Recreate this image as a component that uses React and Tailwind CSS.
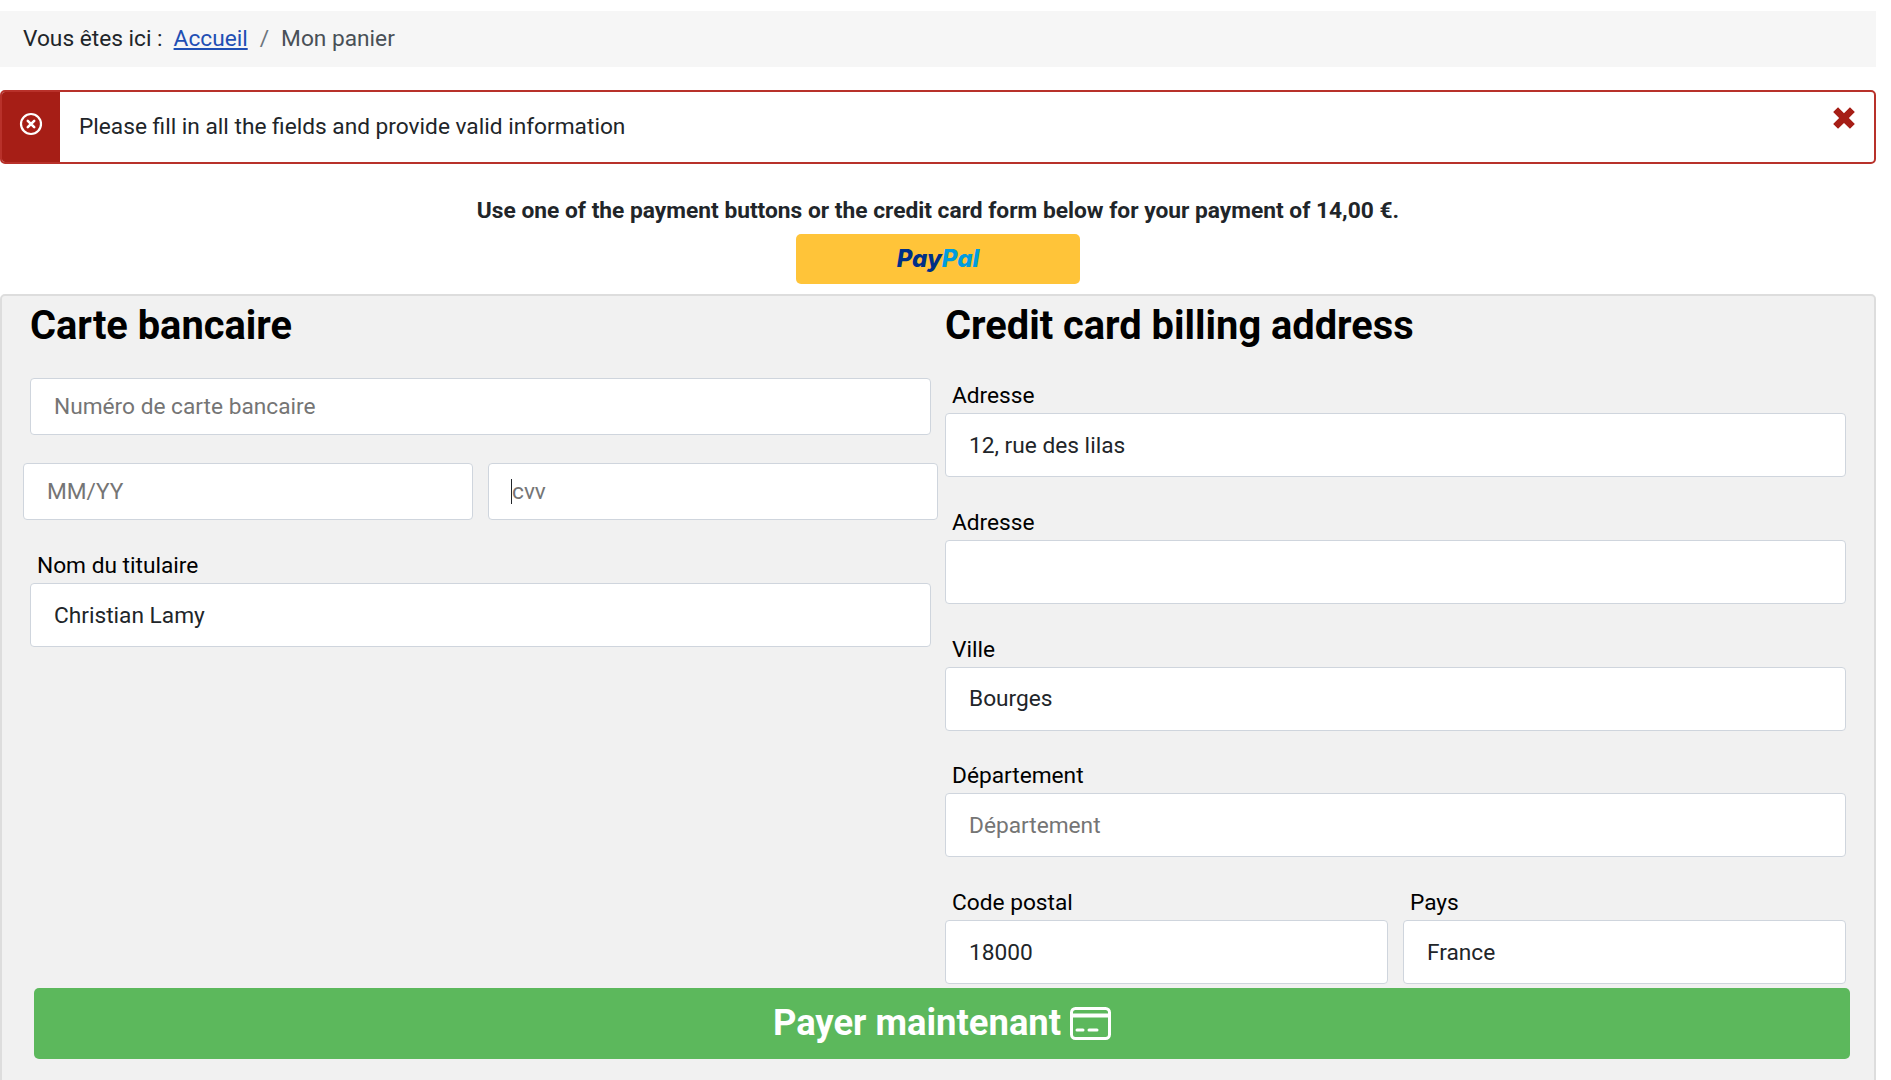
import React from 'react';

const fieldCls = "w-full bg-white border-[1.5px] border-[#cfd5dd] rounded-[4px] px-[23px] text-[22.7px] text-[#212529] placeholder:text-[#757575] outline-none";

function Field({ label, value, placeholder, labelTop = 'mt-[33.75px]' }) {
  return (
    <div className={labelTop}>
      <label className="block pl-[7px] mb-[5px] h-[24px] leading-[24px] text-[22.7px] text-black">{label}</label>
      <input readOnly className={`${fieldCls} h-[64px]`} value={value || ''} placeholder={placeholder} />
    </div>
  );
}

export default function App() {
  return (
    <div className="h-screen overflow-hidden bg-white font-['Roboto',sans-serif] text-[#212529]">
      <div className="w-[1876px] pt-[11px]">
        {/* breadcrumb */}
        <div className="h-[56px] bg-[#f6f6f6] flex items-center pl-[23px] text-[22.7px]">
          <span>Vous êtes ici :</span>
          <a href="#" className="ml-[11px] text-[#1f4fb4] underline">Accueil</a>
          <span className="mx-[12px] text-[#6c757d]">/</span>
          <span className="text-[#495057]">Mon panier</span>
        </div>

        {/* alert */}
        <div className="relative mt-[23px] h-[74px] flex items-center bg-white border-2 border-[#b8312a] rounded-[5px] overflow-hidden">
          <div className="h-full w-[58px] bg-[#a61e16] flex items-start justify-center pt-[20px] shrink-0">
            <svg width="24" height="24" viewBox="0 0 24 24" fill="none" stroke="white" strokeWidth="2.2" strokeLinecap="round">
              <circle cx="12" cy="12" r="10" />
              <path d="M8.8 8.8l6.4 6.4M15.2 8.8l-6.4 6.4" strokeWidth="2.6" />
            </svg>
          </div>
          <span className="ml-[19px] pt-[1px] text-[22.7px]">Please fill in all the fields and provide valid information</span>
          <svg className="absolute right-[17px] top-[13px]" width="26" height="26" viewBox="0 0 24 24" fill="#a61e16">
            <path d="M2 6.5L6.5 2 12 7.5 17.5 2 22 6.5 16.5 12 22 17.5 17.5 22 12 16.5 6.5 22 2 17.5 7.5 12z" />
          </svg>
        </div>

        {/* payment intro */}
        <p className="mt-[32px] h-[29px] leading-[29px] text-center font-bold text-[22.75px]">
          Use one of the payment buttons or the credit card form below for your payment of 14,00 €.
        </p>
        <button className="block mx-auto mt-[9px] w-[284px] h-[50px] bg-[#ffc439] rounded-[5px] font-['Inter',sans-serif] text-[24px] font-extrabold italic">
          <span className="text-[#003087]">Pay</span><span className="text-[#009cde]">Pal</span>
        </button>

        {/* card form */}
        <div className="mt-[10px] h-[820px] bg-[#f1f1f1] border-2 border-[#dddddd] rounded-[5px]">
          <div className="grid grid-cols-[901px_901px] gap-x-[14px] pl-[28px]">
            <div>
              <h3 className="mt-[10px] h-[40px] leading-[40px] text-[39.8px] font-bold text-black">Carte bancaire</h3>
              <input readOnly className={`${fieldCls} mt-[32px] h-[57px]`} placeholder="Numéro de carte bancaire" />
              <div className="mt-[28px] -mx-[7px] grid grid-cols-2 gap-x-[15px]">
                <input readOnly className={`${fieldCls} h-[57px]`} placeholder="MM/YY" />
                <div className="relative">
                  <input readOnly className={`${fieldCls} h-[57px]`} placeholder="cvv" />
                  <span className="absolute left-[23px] top-[16px] h-[25px] w-px bg-[#212529]"></span>
                </div>
              </div>
              <Field label="Nom du titulaire" value="Christian Lamy" labelTop="mt-[34px]" />
            </div>
            <div>
              <h3 className="mt-[10px] h-[40px] leading-[40px] text-[39.8px] font-bold text-black">Credit card billing address</h3>
              <Field label="Adresse" value="12, rue des lilas" labelTop="mt-[38px]" />
              <Field label="Adresse" />
              <Field label="Ville" value="Bourges" />
              <Field label="Département" placeholder="Département" />
              <div className="grid grid-cols-2 gap-x-[15px]">
                <Field label="Code postal" value="18000" />
                <Field label="Pays" value="France" />
              </div>
            </div>
          </div>
          <button className="mt-[4px] ml-[32px] w-[1816px] h-[71px] bg-[#5cb85c] rounded-[5px] flex items-center justify-center gap-[9px] text-white font-bold text-[36.4px]">
            Payer maintenant
            <svg width="41" height="33" viewBox="0 0 41 33" fill="none" stroke="white" strokeWidth="3" strokeLinecap="round">
              <rect x="1.5" y="1.5" width="38" height="30" rx="4" />
              <path d="M1.5 8.5h38" strokeWidth="4" strokeLinecap="butt" />
              <path d="M7 23h6M19 23h8" />
            </svg>
          </button>
        </div>
      </div>
    </div>
  );
}
